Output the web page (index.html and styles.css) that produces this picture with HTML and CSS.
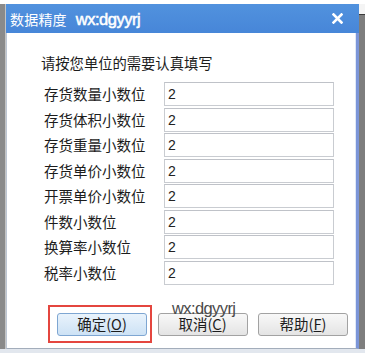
FILE: index.html
```html
<!DOCTYPE html>
<html lang="zh-CN">
<head>
<meta charset="utf-8">
<title>数据精度</title>
<link rel="stylesheet" href="styles.css">
</head>
<body>
<div class="screen">
  <div class="top-strip"></div>
  <div class="middle">
    <div class="side side-left"></div>
    <div class="dialog">
      <div class="titlebar">
        <span class="title-cn">数据精度</span>
        <span class="title-en">wx:dgyyrj</span>
        <svg class="close" width="11" height="11" viewBox="0 0 11 11">
          <path d="M1.5 1.5 L9.5 9.5 M9.5 1.5 L1.5 9.5" stroke="#ffffff" stroke-width="2.6" stroke-linecap="square"/>
        </svg>
      </div>
      <div class="content">
        <div class="heading">请按您单位的需要认真填写</div>
        <div class="rows">
          <div class="row"><span class="label">存货数量小数位</span><span class="field">2</span></div>
          <div class="row"><span class="label">存货体积小数位</span><span class="field">2</span></div>
          <div class="row"><span class="label">存货重量小数位</span><span class="field">2</span></div>
          <div class="row"><span class="label">存货单价小数位</span><span class="field">2</span></div>
          <div class="row"><span class="label">开票单价小数位</span><span class="field">2</span></div>
          <div class="row"><span class="label">件数小数位</span><span class="field">2</span></div>
          <div class="row"><span class="label">换算率小数位</span><span class="field">2</span></div>
          <div class="row"><span class="label">税率小数位</span><span class="field">2</span></div>
        </div>
        <div class="buttons">
          <div class="btn btn-default">确定(<u>O</u>)</div>
          <div class="btn">取消(<u>C</u>)</div>
          <div class="btn">帮助(<u>F</u>)</div>
        </div>
        <div class="highlight"></div>
        <div class="watermark">wx:dgyyrj</div>
      </div>
    </div>
    <div class="side side-right"></div>
  </div>
  <div class="bottom-strip"></div>
</div>
</body>
</html>
```

FILE: styles.css
```css
html, body {
  margin: 0;
  padding: 0;
}
body {
  width: 365px;
  height: 353px;
  overflow: hidden;
  background: #ffffff;
  font-family: "Noto Sans CJK SC", "Liberation Sans", sans-serif;
  color: #1c1c1c;
}
.screen {
  width: 365px;
  height: 353px;
  display: flex;
  flex-direction: column;
}
.top-strip {
  height: 4px;
  background: #ffffff;
}
.middle {
  height: 345px;
  display: flex;
}
.side {
  width: 6px;
}
.side-left {
  background: #8a8a8a;
  box-sizing: border-box;
  border-right: 1px solid #c4c4c4;
}
.side-right {
  background: linear-gradient(#f4f4f4 0, #f4f4f4 10px, #3a3a3a 10px, #3a3a3a 11px, #7e7e7e 11px);
}
.dialog {
  width: 353px;
  display: flex;
  flex-direction: column;
}
.titlebar {
  height: 29px;
  background: linear-gradient(#5192de, #4786d8);
  display: flex;
  align-items: center;
  padding-left: 4px;
  color: #ffffff;
  position: relative;
}
.title-cn {
  font-size: 14px;
  line-height: 18px;
  letter-spacing: 0.2px;
}
.title-en {
  font-family: "Liberation Sans", sans-serif;
  font-size: 16.5px;
  line-height: 18px;
  margin-left: 9px;
  letter-spacing: -0.5px;
  -webkit-text-stroke: 0.5px #ffffff;
}
.close {
  margin-left: auto;
  margin-right: 16px;
}
.content {
  flex: 1;
  background: #ffffff;
  border-left: 1px solid #bcc5d2;
  border-right: 3px solid #7b95d8;
  border-bottom: 1px solid #a3adbb;
  box-shadow: inset -1px 0 0 #dfe8f6;
  position: relative;
  padding-top: 20px;
}
.heading {
  padding-left: 34px;
  font-size: 14.3px;
  line-height: 20px;
}
.rows {
  margin-top: 9px;
  padding-left: 37px;
  display: flex;
  flex-direction: column;
  gap: 1.5px;
}
.row {
  display: flex;
  align-items: center;
  height: 24px;
}
.label {
  width: 120px;
  font-size: 14.5px;
  line-height: 20px;
}
.field {
  box-sizing: border-box;
  width: 170px;
  height: 24px;
  border: 1px solid #c9ccd1;
  border-top-color: #bfc2c8;
  padding-left: 3px;
  font-family: "Liberation Sans", sans-serif;
  font-size: 14px;
  line-height: 22px;
  color: #222222;
}
.buttons {
  margin-top: 28.5px;
  padding-left: 50px;
  display: flex;
  gap: 10.5px;
}
.btn {
  box-sizing: border-box;
  width: 90px;
  height: 23px;
  border: 1px solid #a2a2a2;
  border-radius: 3px;
  background: linear-gradient(#f8f8f8, #e4e4e4);
  font-size: 14.5px;
  line-height: 20px;
  text-align: center;
  color: #1c1c1c;
}
.btn u {
  text-decoration-thickness: 1px;
  text-underline-offset: 1px;
}
.btn-default {
  border-color: #7ea6d2;
  background: linear-gradient(#e9f3fc, #cde2f5);
}
.highlight {
  position: absolute;
  left: 41px;
  top: 272px;
  width: 104px;
  height: 38px;
  box-sizing: border-box;
  border: 2px solid #e4463f;
}
.watermark {
  position: absolute;
  left: 165px;
  top: 266px;
  font-family: "Liberation Sans", sans-serif;
  font-size: 16.5px;
  line-height: 18px;
  letter-spacing: -0.6px;
  color: #4a4a4a;
}
.bottom-strip {
  height: 4px;
  background: #e2e7ee;
}
```
